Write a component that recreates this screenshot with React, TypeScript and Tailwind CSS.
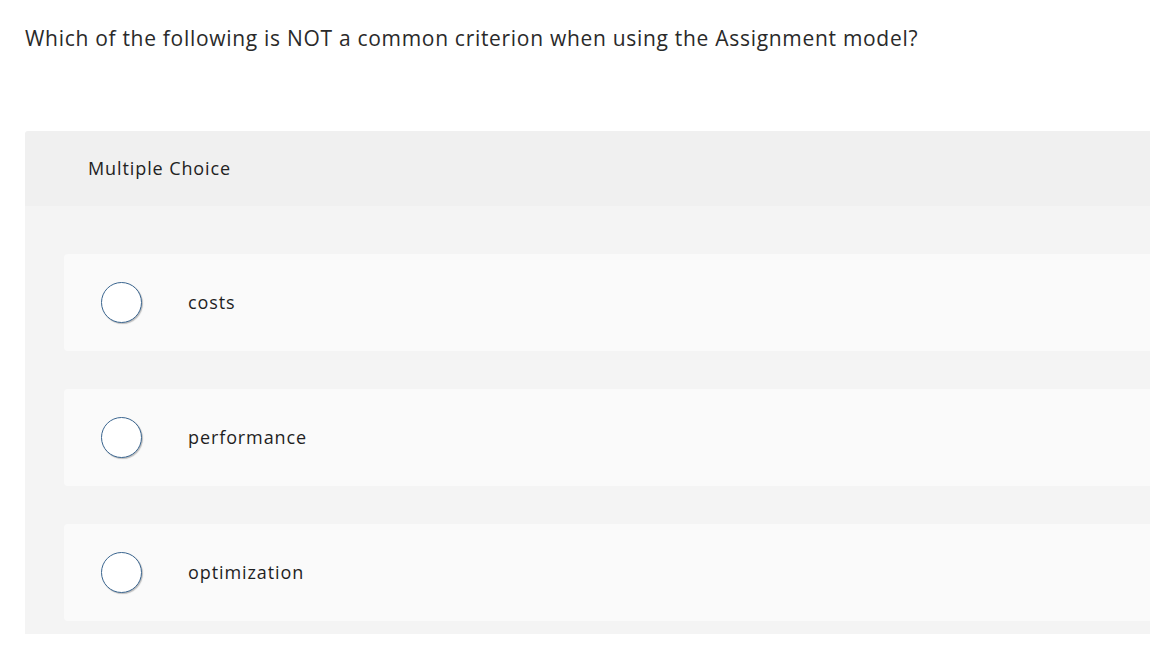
import React from 'react';

const options = ['costs', 'performance', 'optimization'];

const App: React.FC = () => {
  return (
    <div className="w-[1150px] h-[656px] bg-white overflow-hidden text-[#1f1f1f]" style={{ fontFamily: '"Open Sans", Lato, sans-serif' }}>
      {/* QUESTION */}
      <p className="pl-[25px] pt-[24px] text-[21px] leading-[28px] tracking-[0.7px] text-[#2a2a2a]">
        Which of the following is NOT a common criterion when using the Assignment model?
      </p>

      {/* PANEL */}
      <div className="ml-[25px] mt-[79px] w-[1160px] rounded-tl-[3px] overflow-hidden">
        <div className="h-[75px] bg-[#f0f0f0] flex items-center pl-[63px]">
          <span className="text-[18px] tracking-[0.9px] text-[#222]">Multiple Choice</span>
        </div>
        <div className="bg-[#f4f4f4] pt-[48px] pb-[13px] pl-[39px] flex flex-col gap-[38px]">
          {options.map((opt) => (
            <div key={opt} className="h-[97px] bg-[#fafafa] rounded-l-[4px] flex items-center">
              <span className="ml-[37px] w-[41px] h-[41px] rounded-full bg-white border-[1.5px] border-[#3b6690] shadow-[1px_1px_1px_rgba(0,0,0,0.25)] shrink-0"></span>
              <span className="ml-[46px] text-[18px] tracking-[0.9px] text-[#1f1f1f]">{opt}</span>
            </div>
          ))}
        </div>
      </div>
    </div>
  );
};

export default App;
